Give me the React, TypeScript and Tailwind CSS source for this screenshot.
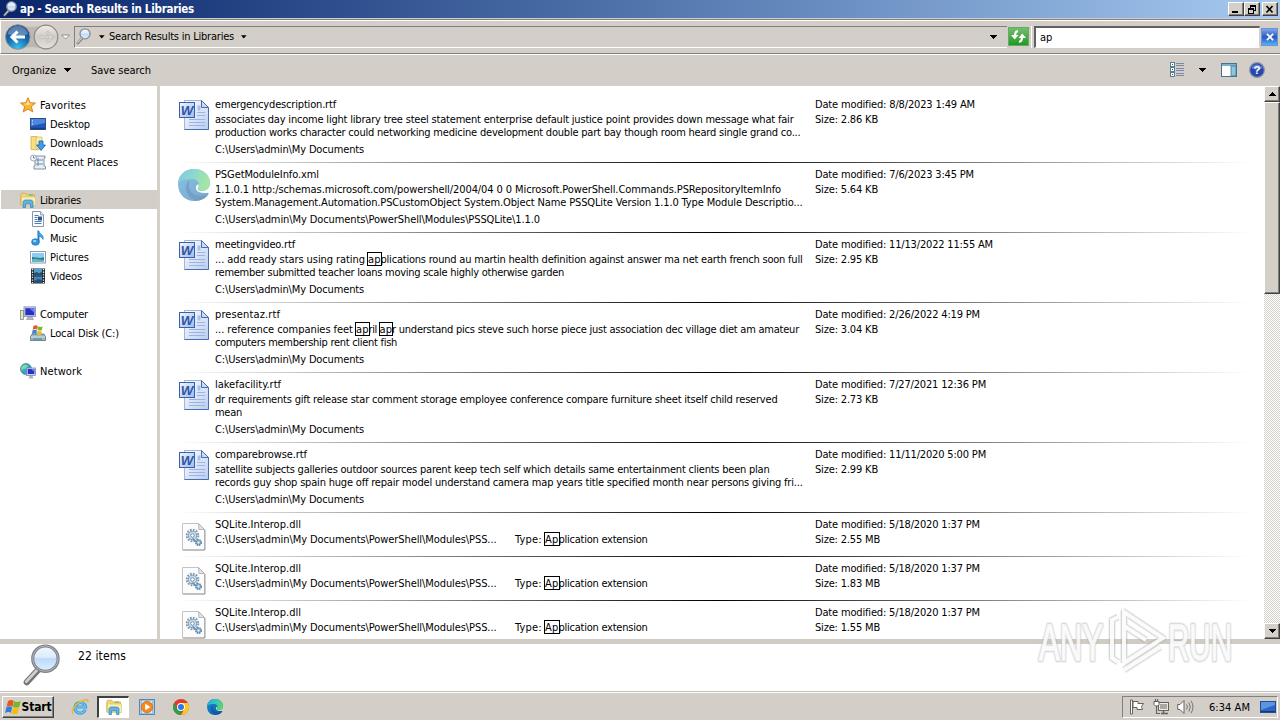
import { useLayoutEffect, useRef } from "react";
import type { ReactNode } from "react";

/** Single line of text whose tracking is adjusted so that it spans `w` pixels. */
function T({ w, children, className = "" }: { w: number; children: ReactNode; className?: string }) {
  const ref = useRef<HTMLSpanElement>(null);
  useLayoutEffect(() => {
    const el = ref.current;
    if (!el) return;
    el.style.letterSpacing = "0px";
    const natural = el.getBoundingClientRect().width;
    const count = (el.textContent || "").length;
    if (count > 0) el.style.letterSpacing = `${(w - natural) / count}px`;
  }, [w, children]);
  return (
    <span ref={ref} className={`inline-block shrink-0 whitespace-pre ${className}`}>
      {children}
    </span>
  );
}

type Seg = { text: string; w: number; hit?: boolean };

/** A line made of plain pieces and boxed search hits. */
function Segments({ parts }: { parts: Seg[] }) {
  return (
    <div className="flex h-[13px] items-start">
      {parts.map((p, i) => (
        <T key={i} w={p.w} className={p.hit ? "mt-px h-[12px] leading-[13px] outline outline-1 outline-black" : "h-[13px] leading-[15px]"}>
          {p.text}
        </T>
      ))}
    </div>
  );
}

function Caret({ className = "" }: { className?: string }) {
  return (
    <svg width="7" height="4" viewBox="0 0 7 4" className={`shrink-0 ${className}`} shapeRendering="crispEdges">
      <path d="M0 0h7L3.500 4z" fill="#000" />
    </svg>
  );
}

function SmallCaret({ className = "" }: { className?: string }) {
  return (
    <svg width="6" height="4" viewBox="0 0 6 4" className={`shrink-0 ${className}`}>
      <path d="M0 .3h5.600L2.800 3.500z" fill="#000" />
    </svg>
  );
}

function Magnifier({ size }: { size: number }) {
  return (
    <svg width={size} height={size} viewBox="0 0 40 44" className="shrink-0">
      <defs>
        <linearGradient id="lens" x1="0" y1="0" x2="0" y2="1">
          <stop offset="0" stopColor="#f2f8ff" />
          <stop offset=".45" stopColor="#dcebfc" />
          <stop offset=".5" stopColor="#bcdafa" />
          <stop offset="1" stopColor="#dff0ff" />
        </linearGradient>
      </defs>
      <path d="M17 26L5 39" stroke="#747474" strokeWidth="6.500" strokeLinecap="round" />
      <path d="M15.500 26.500L4.500 38.500" stroke="#cfcfcf" strokeWidth="3" strokeLinecap="round" />
      <circle cx="24" cy="15" r="13" fill="url(#lens)" stroke="#808288" strokeWidth="3.200" />
      <circle cx="24" cy="15" r="13" fill="none" stroke="#b4b7bd" strokeWidth="1" />
    </svg>
  );
}

function WordIcon() {
  return (
    <svg width="32" height="32" viewBox="0 0 32 32" className="shrink-0">
      <defs>
        <linearGradient id="wpage" x1="0" y1="0" x2="1" y2="1">
          <stop offset="0" stopColor="#ffffff" />
          <stop offset="1" stopColor="#b9cdf0" />
        </linearGradient>
        <linearGradient id="wbox" x1="0" y1="0" x2="1" y2="1">
          <stop offset="0" stopColor="#f3f7ff" />
          <stop offset="1" stopColor="#9dbaf0" />
        </linearGradient>
      </defs>
      <path d="M6.500 1.500h17l7 7v22h-24z" fill="url(#wpage)" stroke="#9fb6de" />
      <path d="M30.500 8v22.500h-24" fill="none" stroke="#4a6db0" />
      <path d="M23.500 1.500v7h7z" fill="#c9daf6" stroke="#4a6cae" />
      <path d="M19.500 6.500h3v5h-3z" fill="#a9c1ea" />
      <path d="M19 13.500h8M19 16.500h8M11 20.500h16M11 23.500h16M11 26.500h16" stroke="#9ab3e2" />
      <rect x="1.500" y="3.500" width="15" height="15" fill="url(#wbox)" stroke="#3a60ab" />
      <text x="2.800" y="15.800" textLength="12.500" lengthAdjust="spacingAndGlyphs" fontFamily="Liberation Sans, sans-serif" fontSize="12.500" fontWeight="700" fontStyle="italic" fill="#2f57a4">W</text>
    </svg>
  );
}

function EdgeIcon({ size, faded = false }: { size: number; faded?: boolean }) {
  const id = faded ? "f" : "s";
  return (
    <svg width={size} height={size} viewBox="0 0 32 32" className="shrink-0">
      <defs>
        <linearGradient id={`top${id}`} x1="0" y1="0" x2="1" y2=".3">
          <stop offset="0" stopColor={faded ? "#84c6e4" : "#2aa7df"} />
          <stop offset=".5" stopColor={faded ? "#8bd8cf" : "#32c2c4"} />
          <stop offset="1" stopColor={faded ? "#a4e6a6" : "#55d66b"} />
        </linearGradient>
        <linearGradient id={`low${id}`} x1="0" y1="0" x2="0.700" y2="1">
          <stop offset="0" stopColor={faded ? "#82c6e8" : "#1696dc"} />
          <stop offset="1" stopColor={faded ? "#7ea8cc" : "#0c59a4"} />
        </linearGradient>
      </defs>
      <path d="M0 15C0 6 7 0 16 0c9 0 16 6 16 14 0 5-4 8-8 8-3 0-5-1-4-3 1-1 1-2 0-4-4 3-3 10 9 9 2-.5 2 .500 1 2-3 4-8 6-14 6C7 32 0 25 0 15z" fill={`url(#low${id})`} />
      <path d="M0 15C1 6 8 0 16 0c9 0 16 6 16 14 0 5-4 8-8 8-3 0-5-1-4-3 3-5-1-9-6-9-6 0-13 1-14 5z" fill={`url(#top${id})`} />
      <path d="M12 11C5 15 7 28 18 31.500c5 0 9-2 11-5.500-9 3-17-1-18-8 0-3 0-5 1-7z" fill={faded ? "#6f98c0" : "#1155a0"} opacity=".7" />
    </svg>
  );
}

function DllIcon() {
  return (
    <svg width="24" height="28" viewBox="0 0 24 28" className="shrink-0">
      <path d="M.500.500h16l6 6v20.500H.5z" fill="#fcfcfc" stroke="#c4c4c4" />
      <path d="M1 27h22V7" fill="none" stroke="#999" strokeWidth=".9" />
      <path d="M16.500.5l.5 6h5.500z" fill="#e4e4e4" stroke="#aaa" strokeWidth=".8" />
      <circle cx="10.500" cy="12.500" r="5.800" fill="none" stroke="#8199ae" strokeWidth="2" strokeDasharray="1.800 1.200" />
      <circle cx="10.500" cy="12.500" r="4.200" fill="#c8dff0" stroke="#7d9ab3" strokeWidth="1" />
      <circle cx="10.500" cy="12.500" r="1.800" fill="#fff" stroke="#5d7d9b" strokeWidth=".8" />
      <path d="M10.500 15.500l3 3" stroke="#6c8aa6" strokeWidth="1.500" />
      <circle cx="16.500" cy="19.500" r="2.800" fill="#8db9da" stroke="#5f84a6" strokeWidth="1.500" strokeDasharray="1.500 .8" />
      <circle cx="16.500" cy="19.500" r="1" fill="#e8f4fb" />
    </svg>
  );
}

function LibraryIcon() {
  return (
    <svg width="16" height="16" viewBox="0 0 16 16" className="shrink-0">
      <path d="M.700 3l1-1.700h4L7 3h7.500v10H.7z" fill="#f3d579" stroke="#c9a645" strokeWidth=".7" />
      <path d="M1.500 5h14v8.500h-14z" fill="#fbeeb0" stroke="#d9bd62" strokeWidth=".6" />
      <path d="M9 3h4" stroke="#63b35a" />
      <path d="M3 15.500V9.500L4.500 8h7L13 9.500v6h-2.500V12h-5v3.500z" fill="#62b3e4" stroke="#2f7fb8" strokeWidth=".7" />
    </svg>
  );
}

function SideIcon({ kind }: { kind: string }) {
  const svg = (body: ReactNode) => (
    <svg width="16" height="16" viewBox="0 0 16 16" className="shrink-0">
      {body}
    </svg>
  );
  switch (kind) {
    case "star":
      return svg(
        <>
          <path d="M8 .7l2.100 5 5.400.4-4.100 3.500 1.400 5.400L8 12l-4.800 3 1.400-5.400L.5 6.100l5.400-.4z" fill="#fbb632" stroke="#d67a1d" strokeWidth=".9" />
          <path d="M8 3l1.300 3.500 3 .3L8 8 3.500 7l3-.5z" fill="#fee48a" />
        </>,
      );
    case "desktop":
      return svg(
        <>
          <rect x=".5" y="2.500" width="15" height="11" fill="#2456b8" stroke="#2a4f8e" />
          <path d="M1 3h14v4L1 10z" fill="#4c88df" />
          <path d="M1 12.500h14" stroke="#1d3f78" strokeWidth="1.500" />
          <path d="M2 5h1M2 8h1" stroke="#fff" />
        </>,
      );
    case "downloads":
      return svg(
        <>
          <path d="M1 1.500h6l1 1.500v12l-7-.5z" fill="#f7df85" stroke="#cba63e" strokeWidth=".7" />
          <path d="M6 2h6v12H6z" fill="#fbecae" stroke="#d4b252" strokeWidth=".7" />
          <path d="M9 6h4v4h2.500L11 15.500 6.500 10H9z" fill="#3e9ee6" stroke="#1a5fa8" strokeWidth=".8" />
        </>,
      );
    case "recent":
      return svg(
        <>
          <path d="M4 2h11v2h-1v8l1.500.500V15H4v-3h1V5" fill="#e8eef3" stroke="#76879a" strokeWidth=".9" />
          <path d="M7 5h2v2H7zM10 6h3M7 9h2v2H7zM10 10h3" fill="none" stroke="#52779b" strokeWidth=".8" />
          <circle cx="3.500" cy="4" r="3" fill="#f6f9fb" stroke="#8393a3" strokeWidth=".8" />
          <path d="M3.500 2v2h1.500" fill="none" stroke="#555" strokeWidth=".7" />
        </>,
      );
    case "library":
      return <LibraryIcon />;
    case "document":
      return svg(
        <>
          <path d="M2.500.500h8l3 3.500v11.500h-11z" fill="#fff" stroke="#8496a8" />
          <path d="M10.500.5V4h3" fill="#dbe5ee" stroke="#8496a8" strokeWidth=".8" />
          <path d="M4.500 4.500h4M4.500 6.500h3M4.500 8.500h3M4.500 10.500h7M4.500 12.500h7" stroke="#2c6fb5" strokeWidth=".9" />
          <path d="M8 5.500h4v4H8z" fill="#2f5a88" />
        </>,
      );
    case "music":
      return svg(
        <>
          <path d="M8.500 1v11" stroke="#1a79c6" strokeWidth="1.800" />
          <path d="M8 .500c1 3.500 6.500 4 5 9C12 6.500 9 6.500 8 5.500z" fill="#3ea2e4" stroke="#1a79c6" strokeWidth=".6" />
          <ellipse cx="5.500" cy="12" rx="3.900" ry="3.300" fill="#2f97df" stroke="#1467ad" strokeWidth=".6" />
          <ellipse cx="4.700" cy="11" rx="1.700" ry="1" fill="#a8dcfa" />
        </>,
      );
    case "picture":
      return svg(
        <>
          <rect x=".5" y="2.500" width="15" height="11.500" fill="#fff" stroke="#8b9eb0" />
          <rect x="2" y="4" width="12" height="8.500" fill="#8ecbf0" />
          <path d="M2 8c4 0 8 2 12 0v4.500H2z" fill="#2d8180" />
          <path d="M2 10.500c4-2 8 1 12 .5v1.500H2z" fill="#63b7c9" />
        </>,
      );
    case "video":
      return svg(
        <>
          <rect x="1" y=".5" width="14" height="15" fill="#20292f" />
          <rect x="4" y="1" width="8" height="6.500" fill="#4d9fd6" />
          <rect x="4" y="8.500" width="8" height="6.500" fill="#3d88c4" />
          <path d="M4 5l3-1 2 1.500 3-2V7.500H4zM4 13l4-2 4 1v3H4z" fill="#294f6c" />
          <path d="M2.500 1v14M13.500 1v14" stroke="#e8edf0" strokeWidth="1.300" strokeDasharray="1.300 1.300" />
        </>,
      );
    case "computer":
      return svg(
        <>
          <rect x=".5" y="4.500" width="3" height="9" fill="#dfe4cf" stroke="#81906b" strokeWidth=".8" />
          <rect x="4" y=".900" width="11.500" height="9.600" fill="#d2d4e8" stroke="#7e82ad" strokeWidth=".8" />
          <rect x="5.300" y="2.200" width="9" height="7" fill="#2432c4" />
          <path d="M9 2.200h5.300v4.500z" fill="#6879ea" />
          <path d="M8 11h4l1.500 2.500h-7z" fill="#b9bccb" stroke="#858798" strokeWidth=".6" />
        </>,
      );
    case "disk":
      return svg(
        <>
          <path d="M2 9h12l1.500 3v3.500H.5V12z" fill="#9eb6c2" stroke="#56717e" strokeWidth=".8" />
          <path d="M1 12h14" stroke="#d7e4e9" />
          <path d="M3 14h9" stroke="#4e8f9c" strokeWidth="1.200" />
          <path d="M3.500 1q2-1.500 4.300 0L7.200 4.700q-2-1.200-4.500 0z" fill="#ea5a24" />
          <path d="M8.300 1.300q2 1.300 4.300 0l-.7 3.700q-2 1.200-4.300 0z" fill="#7bb82e" />
          <path d="M2.500 5.300q2.200-1.300 4.500 0l-.7 3.900q-2-1.300-4.300 0z" fill="#3786d3" />
          <path d="M7.500 5.700q2 1.300 4.300 0l-.7 3.700q-2 1.200-4.300 0z" fill="#f6b719" />
        </>,
      );
    default:
      return svg(
        <>
          <circle cx="6" cy="6" r="5.500" fill="#36a7bd" stroke="#1c6d88" strokeWidth=".6" />
          <path d="M2 3q4-3 6 0-1 3-4 3T3 9Q0 6 2 3z" fill="#7ed7a4" />
          <rect x="6.500" y="5" width="9" height="7.500" fill="#d3d6ea" stroke="#6f76ac" strokeWidth=".7" />
          <rect x="7.700" y="6" width="6.700" height="5" fill="#2335c7" />
          <path d="M11 6h3.400v3z" fill="#6c81ee" />
          <path d="M9.500 13h3l1 2.500h-5z" fill="#aeb2c3" />
        </>,
      );
  }
}

type NavItem = { label: string; kind: string; w: number; root?: boolean; active?: boolean } | null;

const NAV: NavItem[] = [
  { label: "Favorites", kind: "star", w: 46, root: true },
  { label: "Desktop", kind: "desktop", w: 40 },
  { label: "Downloads", kind: "downloads", w: 53 },
  { label: "Recent Places", kind: "recent", w: 68 },
  null,
  { label: "Libraries", kind: "library", w: 41, root: true, active: true },
  { label: "Documents", kind: "document", w: 54 },
  { label: "Music", kind: "music", w: 27 },
  { label: "Pictures", kind: "picture", w: 39 },
  { label: "Videos", kind: "video", w: 32 },
  null,
  { label: "Computer", kind: "computer", w: 48, root: true },
  { label: "Local Disk (C:)", kind: "disk", w: 69 },
  null,
  { label: "Network", kind: "network", w: 42, root: true },
];

type Line = { text: string; w: number };
type Doc = { icon: "word" | "edge"; name: Line; lines: Seg[][]; path: Line; date: Line; size: string };

const DOCS_PATH: Line = { text: "C:\\Users\\admin\\My Documents", w: 149 };

const DOCS: Doc[] = [
  {
    icon: "word",
    name: { text: "emergencydescription.rtf", w: 121 },
    lines: [
      [{ text: "associates day income light library tree steel statement enterprise default justice point provides down message what fair", w: 578.5 }],
      [{ text: "production works character could networking medicine development double part bay though room heard single grand co...", w: 585.5 }],
    ],
    path: DOCS_PATH,
    date: { text: "Date modified: 8/8/2023 1:49 AM", w: 160 },
    size: "Size: 2.86 KB",
  },
  {
    icon: "edge",
    name: { text: "PSGetModuleInfo.xml", w: 104 },
    lines: [
      [{ text: "1.1.0.1 http:/schemas.microsoft.com/powershell/2004/04 0 0 Microsoft.PowerShell.Commands.PSRepositoryItemInfo", w: 566 }],
      [{ text: "System.Management.Automation.PSCustomObject System.Object Name PSSQLite Version 1.1.0 Type Module Descriptio...", w: 587.5 }],
    ],
    path: { text: "C:\\Users\\admin\\My Documents\\PowerShell\\Modules\\PSSQLite\\1.1.0", w: 325 },
    date: { text: "Date modified: 7/6/2023 3:45 PM", w: 159 },
    size: "Size: 5.64 KB",
  },
  {
    icon: "word",
    name: { text: "meetingvideo.rtf", w: 80 },
    lines: [
      [
        { text: "... add ready stars using rating ", w: 153 },
        { text: "ap", w: 12.5, hit: true },
        { text: "plications round au martin health definition against answer ma net earth french soon full", w: 422 },
      ],
      [{ text: "remember submitted teacher loans moving scale highly otherwise garden", w: 349 }],
    ],
    path: DOCS_PATH,
    date: { text: "Date modified: 11/13/2022 11:55 AM", w: 178 },
    size: "Size: 2.95 KB",
  },
  {
    icon: "word",
    name: { text: "presentaz.rtf", w: 65 },
    lines: [
      [
        { text: "... reference companies feet ", w: 141 },
        { text: "ap", w: 12.5, hit: true },
        { text: "ril ", w: 11 },
        { text: "ap", w: 12.5, hit: true },
        { text: "r understand pics steve such horse piece just association dec village diet am amateur", w: 407 },
      ],
      [{ text: "computers membership rent client fish", w: 182 }],
    ],
    path: DOCS_PATH,
    date: { text: "Date modified: 2/26/2022 4:19 PM", w: 165 },
    size: "Size: 3.04 KB",
  },
  {
    icon: "word",
    name: { text: "lakefacility.rtf", w: 66 },
    lines: [
      [{ text: "dr requirements gift release star comment storage employee conference compare furniture sheet itself child reserved", w: 562.5 }],
      [{ text: "mean", w: 27 }],
    ],
    path: DOCS_PATH,
    date: { text: "Date modified: 7/27/2021 12:36 PM", w: 171 },
    size: "Size: 2.73 KB",
  },
  {
    icon: "word",
    name: { text: "comparebrowse.rtf", w: 92 },
    lines: [
      [{ text: "satellite subjects galleries outdoor sources parent keep tech self which details same entertainment clients been plan", w: 554.5 }],
      [{ text: "records guy shop spain huge off repair model understand camera map years title specified month near persons giving fri...", w: 587.5 }],
    ],
    path: DOCS_PATH,
    date: { text: "Date modified: 11/11/2020 5:00 PM", w: 171 },
    size: "Size: 2.99 KB",
  },
];

const DLLS = ["Size: 2.55 MB", "Size: 1.83 MB", "Size: 1.55 MB"];

function Rule() {
  return <div className="ml-[16px] h-px w-[1076px] shrink-0 bg-linear-to-r from-transparent via-black to-transparent" />;
}

function Info({ date, size }: { date: Line; size: string }) {
  return (
    <div className="flex flex-col items-start pt-[4px]">
      <T w={date.w} className="h-[15px] leading-[15px]">{date.text}</T>
      <T w={size.includes("MB") ? 65 : 63} className="h-[14px] leading-[15px]">{size}</T>
    </div>
  );
}

function DocRow({ d }: { d: Doc }) {
  return (
    <div className="flex h-[70px] shrink-0 flex-col">
      <div className="flex h-[69px]">
        <div className="w-[55px] shrink-0 pt-[6px] pl-[18px]">{d.icon === "word" ? <WordIcon /> : <EdgeIcon size={32} faded />}</div>
        <div className="flex w-[600px] shrink-0 flex-col items-start pt-[4px]">
          <T w={d.name.w} className="h-[15px] leading-[15px]">{d.name.text}</T>
          {d.lines.map((parts, i) => (
            <Segments key={i} parts={parts} />
          ))}
          <T w={d.path.w} className="mt-[4px] h-[15px] leading-[15px]">{d.path.text}</T>
        </div>
        <Info date={d.date} size={d.size} />
      </div>
      <Rule />
    </div>
  );
}

function DllRow({ size }: { size: string }) {
  return (
    <div className="flex h-[44px] shrink-0 flex-col">
      <div className="flex h-[43px]">
        <div className="w-[55px] shrink-0 pt-[10px] pl-[22px]"><DllIcon /></div>
        <div className="flex w-[300px] shrink-0 flex-col items-start pt-[4px]">
          <T w={86} className="h-[15px] leading-[15px]">SQLite.Interop.dll</T>
          <T w={281.500} className="h-[14px] leading-[15px]">{"C:\\Users\\admin\\My Documents\\PowerShell\\Modules\\PSS..."}</T>
        </div>
        <div className="w-[300px] shrink-0 pt-[19px]">
          <Segments parts={[{ text: "Type: ", w: 30 }, { text: "Ap", w: 13.5, hit: true }, { text: "plication extension", w: 89 }]} />
        </div>
        <Info date={{ text: "Date modified: 5/18/2020 1:37 PM", w: 165 }} size={size} />
      </div>
      <Rule />
    </div>
  );
}

const RAISED = "flex items-center justify-center border border-t-white border-l-white border-r-[#404040] border-b-[#404040] bg-[#d4d0c8] shadow-[inset_-1px_-1px_0_#808080]";

function WindowButton({ kind }: { kind: "min" | "restore" | "close" }) {
  return (
    <div className={`h-[14px] w-[16px] ${RAISED}`}>
      <svg width="10" height="9" viewBox="0 0 10 9" shapeRendering={kind === "close" ? "auto" : "crispEdges"}>
        {kind === "min" && <path d="M1 6h6v2H1z" />}
        {kind === "restore" && <path d="M3 0h6v6H7V5h1V2H4v1H3zM1 3h6v6H1zM2 5v3h4V5z" fillRule="evenodd" />}
        {kind === "close" && <path d="M1.500 1l6 6.500M7.500 1l-6 6.500" stroke="#000" strokeWidth="1.700" />}
      </svg>
    </div>
  );
}

function TitleBar() {
  return (
    <div className="flex h-[18px] shrink-0 items-center bg-linear-to-r from-[#0a246a] to-[#a6caf0] pr-[2px] pl-[2px]">
      <Magnifier size={16} />
      <T w={174} className="ml-[2px] text-[11.500px] leading-[18px] font-bold text-white">ap - Search Results in Libraries</T>
      <div className="ml-auto flex">
        <WindowButton kind="min" />
        <WindowButton kind="restore" />
        <div className="ml-[2px]"><WindowButton kind="close" /></div>
      </div>
    </div>
  );
}

function NavButtons() {
  return (
    <svg width="73" height="28" viewBox="0 0 73 28" className="mt-px shrink-0">
      <defs>
        <radialGradient id="back" cx=".5" cy=".95" r=".9">
          <stop offset="0" stopColor="#35c4ef" />
          <stop offset=".5" stopColor="#1a6fb4" />
          <stop offset="1" stopColor="#123f80" />
        </radialGradient>
        <linearGradient id="fwd" x1="0" y1="0" x2="0" y2="1">
          <stop offset="0" stopColor="#efedea" />
          <stop offset=".5" stopColor="#cfcac4" />
          <stop offset="1" stopColor="#e6e2dd" />
        </linearGradient>
      </defs>
      <path d="M17 1.500q14 5 28 0v25q-14-5-28 0z" fill="#a39f9a" opacity=".5" />
      <circle cx="16.800" cy="14" r="12.300" fill="url(#back)" stroke="#8c969f" strokeWidth="1" />
      <path d="M6.500 11a10.500 10.500 0 0 1 20.500 0q-10 4-20.500 0z" fill="#fff" opacity=".3" />
      <path d="M16.500 8.500L11 14l5.500 5.500M11.500 14H24" fill="none" stroke="#fff" strokeWidth="3" />
      <circle cx="45" cy="14" r="11.800" fill="url(#fwd)" stroke="#8e8a86" strokeWidth="1.200" />
      <path d="M45.500 8.500L51 14l-5.500 5.500M50.500 14H38" fill="none" stroke="#bdb8b3" strokeWidth="3" />
      <path d="M45.500 8.500L51 14l-5.500 5.500M50.500 14H38" fill="none" stroke="#dad6d2" strokeWidth="1.500" />
      <path d="M60.500 12h8L64.500 16z" fill="#fff" stroke="#8b8782" strokeWidth=".9" />
    </svg>
  );
}

function NavBar() {
  return (
    <div className="flex h-[35px] shrink-0 items-center border-t border-b border-l border-t-[#808080] border-b-[#808080] border-l-white bg-[#d4cec8] shadow-[inset_0_1px_0_#fff]">
      <NavButtons />
      <div className="flex h-[22px] w-[933px] shrink-0 items-center border-t border-b border-l border-t-[#808080] border-b-white border-l-[#808080]">
        <Magnifier size={17} />
        <SmallCaret className="ml-[7px]" />
        <T w={125} className="ml-[4px] leading-[18px]">Search Results in Libraries</T>
        <SmallCaret className="ml-[7px]" />
        <Caret className="mr-[10px] ml-auto" />
      </div>
      <div className="ml-[1px] flex h-[19px] w-[21px] shrink-0 items-center justify-center border border-[#6aa868] bg-linear-to-b from-[#6fbf6c] to-[#1d9824]">
        <svg width="17" height="15" viewBox="0 0 17 15">
          <path d="M8 2.500Q5 2 5 7" fill="none" stroke="#fff" strokeWidth="2.200" />
          <path d="M1 6h7.500l-3.700 4.500z" fill="#fff" />
          <path d="M9 12.500Q12 13 12 8" fill="none" stroke="#fff" strokeWidth="2.200" />
          <path d="M8.500 9H16l-3.700-4.500z" fill="#fff" />
        </svg>
      </div>
      <div className="ml-[2px] h-[22px] w-px shrink-0 bg-white" />
      <div className="ml-[2px] flex h-[22px] w-[226px] shrink-0 items-center border-t-2 border-r border-b border-l-2 border-t-[#606060] border-r-[#d4d0c8] border-b-white border-l-[#606060] bg-white pl-[4px]">
        <T w={12} className="pt-px leading-[18px]">ap</T>
      </div>
      <div className="ml-[1px] flex h-[18px] w-[17px] shrink-0 items-center justify-center border border-[#6b93d6] bg-linear-to-b from-[#7ea6ea] via-[#2b58c2] to-[#56b2f2]">
        <svg width="8" height="8" viewBox="0 0 9 9"><path d="M1 1l7 7M8 1L1 8" stroke="#fff" strokeWidth="1.900" /></svg>
      </div>
    </div>
  );
}

function ToolBar() {
  return (
    <div className="flex h-[31px] shrink-0 items-center border-t border-t-white bg-[#d4cec8] pl-[12px]">
      <T w={44}>Organize</T>
      <Caret className="ml-[8px]" />
      <T w={60} className="ml-[20px]">Save search</T>
      <div className="ml-auto flex items-center pr-[15px]">
        <svg width="15" height="16" viewBox="0 0 15 16" shapeRendering="crispEdges">
          {[0, 5, 10].map((y) => (
            <g key={y}>
              <rect x=".5" y={y + 0.5} width="4" height="4" fill="#fff" stroke="#55808f" />
              <rect x="2" y={y + 2} width="1" height="1" fill="#1f5f73" />
              <path d={`M6 ${y + 1.5}h8M6 ${y + 3.5}h8`} stroke="#7c86a8" />
            </g>
          ))}
        </svg>
        <Caret className="ml-[14px]" />
        <svg width="16" height="14" viewBox="0 0 16 14" className="ml-[15px]">
          <rect x=".5" y=".5" width="15" height="13" fill="#fff" stroke="#46748f" />
          <path d="M1 2h14" stroke="#7fb0cc" strokeWidth="2" />
          <rect x="10" y="3" width="5" height="10" fill="#8cc7e2" stroke="#46748f" strokeWidth=".8" />
        </svg>
        <svg width="16" height="16" viewBox="0 0 16 16" className="ml-[12px]">
          <circle cx="8" cy="8" r="7.400" fill="#2648ad" stroke="#8f98ad" strokeWidth="1.200" />
          <path d="M2.500 6a6 6 0 0 1 11 0q-5 3-11 0z" fill="#7d9be3" opacity=".7" />
          <text x="8" y="12" textAnchor="middle" fontFamily="Liberation Sans, sans-serif" fontWeight="700" fontSize="11.500" fill="#fff">?</text>
        </svg>
      </div>
    </div>
  );
}

function ScrollBar() {
  return (
    <div className="flex w-[16px] shrink-0 flex-col bg-[repeating-conic-gradient(#ffffff_0_25%,#d4d0c8_0_50%)] bg-[length:2px_2px]">
      <div className={`h-[16px] shrink-0 ${RAISED}`}>
        <svg width="7" height="4" viewBox="0 0 7 4" shapeRendering="crispEdges"><path d="M0 4h7L3.500 0z" /></svg>
      </div>
      <div className={`h-[192px] shrink-0 ${RAISED}`} />
      <div className={`mt-auto h-[16px] shrink-0 ${RAISED}`}><Caret /></div>
    </div>
  );
}

function WindowsFlag({ size }: { size: number }) {
  return (
    <svg width={size} height={size} viewBox="0 0 16 16" className="shrink-0">
      <path d="M3 2.200q3-2 5.700-.3L7.500 7.500Q5 5.800 1.600 7.500z" fill="#ea5322" />
      <path d="M9.200 2.300q3 1.500 6.500 0L14.300 8q-3.300 1.500-6.500 0z" fill="#76b82a" />
      <path d="M1.400 8.200q3-1.700 5.800-.2l-1.300 5.700Q3.500 12.200.1 13.900z" fill="#2f7fd6" />
      <path d="M7.700 8.700q3 1.500 6.400 0l-1.400 5.700q-3.200 1.500-6.300 0z" fill="#f8bb14" />
    </svg>
  );
}

function TaskBar() {
  return (
    <div className="flex h-[28px] shrink-0 items-center border-t border-t-white bg-[#d4cec8] pr-[2px] pl-[2px] shadow-[0_-1px_0_#c4c0b8]">
      <div className={`mt-px h-[22px] w-[52px] ${RAISED}`}>
        <WindowsFlag size={16} />
        <T w={30} className="ml-[1px] text-[12px] font-bold">Start</T>
      </div>
      <svg width="18" height="18" viewBox="0 0 18 18" className="ml-[17px]">
        <path d="M14.300 11.500A5.300 5.300 0 1 1 14.500 9H6" fill="none" stroke="#3aa4e4" strokeWidth="3.200" />
        <path d="M14.300 11.500A5.300 5.300 0 1 1 14.500 9H6" fill="none" stroke="#8ed2f6" strokeWidth=".9" />
        <path d="M2 16C0 13 3 7 9 4s9-3 7.500.5" fill="none" stroke="#e8b62f" strokeWidth="1.500" />
      </svg>
      <div className="ml-[8px] flex h-[22px] w-[32px] items-center justify-center border border-t-2 border-l-2 border-t-[#404040] border-r-white border-b-white border-l-[#404040] bg-white">
        <LibraryIcon />
      </div>
      <svg width="16" height="16" viewBox="0 0 16 16" className="ml-[10px]">
        <rect x=".5" y=".5" width="15" height="15" fill="#a9cdec" stroke="#5289bd" />
        <rect x="2.500" y="1.500" width="11" height="13" fill="#dcebf7" stroke="#7fa9cf" strokeWidth=".6" />
        <circle cx="8" cy="8" r="5.700" fill="#f28a1c" stroke="#cf6508" strokeWidth=".7" />
        <path d="M6.200 4.800v6.400L11.500 8z" fill="#fff" />
      </svg>
      <svg width="16" height="16" viewBox="0 0 16 16" className="ml-[18px]">
        <circle cx="8" cy="8" r="8" fill="#e13b2d" />
        <path d="M1.070 4L4.540 10 8 12v4A8 8 0 0 1 1.070 4z" fill="#2b9f4b" />
        <path d="M14.930 4A8 8 0 0 1 8 16l3.460-6L8 4z" fill="#fbc822" />
        <circle cx="8" cy="8" r="4" fill="#fff" />
        <circle cx="8" cy="8" r="3" fill="#2f78e2" />
      </svg>
      <div className="ml-[18px]"><EdgeIcon size={16} /></div>
      <div className="ml-auto flex h-[22px] w-[156px] items-center border border-t-[#808080] border-r-white border-b-white border-l-[#808080] pl-[6px]">
        <svg width="16" height="16" viewBox="0 0 16 16">
          <path d="M1.500 1h2v14h-2zM4 2.500h5v2h5.500l-2 3 1 3H8v-2H4z" fill="#fff" stroke="#66625e" strokeWidth="1" />
        </svg>
        <svg width="16" height="16" viewBox="0 0 16 16" className="ml-[8px]">
          <path d="M5.500 3.500h10v8h-10z" fill="#eee" stroke="#66625e" strokeWidth="1.100" />
          <path d="M7 5h7v5H7z" fill="#aaa6a2" />
          <path d="M8 14.500h7M10.500 12v2" stroke="#66625e" strokeWidth="1.500" />
          <path d="M2.500 0v3M4.500 0v3M3.500 4.500v10H7" fill="none" stroke="#66625e" strokeWidth="1.100" />
          <path d="M1 2.500h5v3L4.500 7h-2L1 5.500z" fill="#fff" stroke="#55514e" strokeWidth=".9" />
        </svg>
        <svg width="17" height="16" viewBox="0 0 17 16" className="ml-[8px]">
          <path d="M.7 5.500H3L7 1.500v13L3 10.500H.7z" fill="#fff" stroke="#66625e" />
          <path d="M9.500 5.500q1.700 2.500 0 5M11.800 3.500q3 4.500 0 9M14 1.800q4 6.200 0 12.400" fill="none" stroke="#77736f" strokeWidth="1" />
        </svg>
        <T w={41} className="ml-[15px] pt-px">6:34 AM</T>
        <svg width="16" height="16" viewBox="0 0 16 16" className="ml-[10px]">
          <rect x=".5" y="2.500" width="15" height="11" fill="#2866c7" stroke="#234c92" />
          <path d="M1 3h14v3L1 11z" fill="#5a95e2" />
          <path d="M1 12.500h14" stroke="#173769" />
        </svg>
      </div>
    </div>
  );
}

function Watermark() {
  const letters = { fontFamily: "Liberation Sans Narrow, Liberation Sans, sans-serif", fontSize: 50, lengthAdjust: "spacingAndGlyphs" as const };
  const shapes = (
    <>
      <text x="7" y="58" textLength="64" {...letters}>ANY</text>
      <text x="136" y="58" textLength="64" {...letters}>RUN</text>
    </>
  );
  const play = "M86 15L80 18V56L86 60M92 61V10L131 36L92 61M92 24L114 38M92 68L128 45";
  return (
    <svg width="216" height="76" viewBox="0 0 216 76" className="pointer-events-none absolute top-[602px] left-[1032px] overflow-visible">
      <g fill="none" stroke="#a0a0a0" strokeWidth="6" strokeLinejoin="round" opacity=".14">{shapes}</g>
      <g fill="none" stroke="#a0a0a0" strokeWidth="3.500" strokeLinejoin="round" opacity=".3">{shapes}</g>
      <path d={play} fill="none" stroke="#a0a0a0" strokeWidth="8" strokeLinejoin="round" opacity=".16" />
      <path d={play} fill="none" stroke="#a0a0a0" strokeWidth="6" strokeLinejoin="round" opacity=".3" />
      <g fill="#fff" stroke="#fff" strokeWidth="1.300" opacity=".88">{shapes}</g>
      <path d={play} fill="none" stroke="#fff" strokeWidth="4" opacity=".9" />
    </svg>
  );
}

export default function App() {
  return (
    <div className="relative flex h-[720px] w-[1280px] flex-col overflow-hidden bg-[#d4cec8] font-['DejaVu_Sans_Condensed','DejaVu_Sans',sans-serif] text-[11px] leading-[15px] text-black [font-stretch:condensed]">
      <TitleBar />
      <div className="h-px shrink-0 bg-[#d4cec8]" />
      <NavBar />
      <ToolBar />
      <div className="h-px shrink-0 bg-[#d4cec8]" />
      <div className="flex h-[553px] shrink-0">
        <nav className="flex w-[157px] shrink-0 flex-col bg-white pt-[9px] pl-px">
          {NAV.map((item, i) =>
            item ? (
              <div key={i} className={`flex h-[19px] items-center ${item.root ? "pl-[19px]" : "pl-[29px]"} ${item.active ? "bg-[#d4cec8]" : ""}`}>
                <SideIcon kind={item.kind} />
                <T w={item.w} className="ml-[4px] pt-px">{item.label}</T>
              </div>
            ) : (
              <div key={i} className="h-[19px]" />
            ),
          )}
        </nav>
        <div className="w-[3px] shrink-0 bg-[#d4d0c8]" />
        <main className="flex min-w-0 flex-1 flex-col overflow-hidden bg-white pt-[7px]">
          {DOCS.map((d, i) => <DocRow key={i} d={d} />)}
          {DLLS.map((s) => <DllRow key={s} size={s} />)}
        </main>
        <ScrollBar />
      </div>
      <div className="h-[5px] shrink-0 bg-[#d0ccc4]" />
      <div className="flex h-[48px] shrink-0 items-start bg-white pl-[20px]">
        <Magnifier size={43} />
        <T w={48} className="mt-[5px] ml-[15px] text-[12px]">22 items</T>
      </div>
      <TaskBar />
      <Watermark />
    </div>
  );
}
